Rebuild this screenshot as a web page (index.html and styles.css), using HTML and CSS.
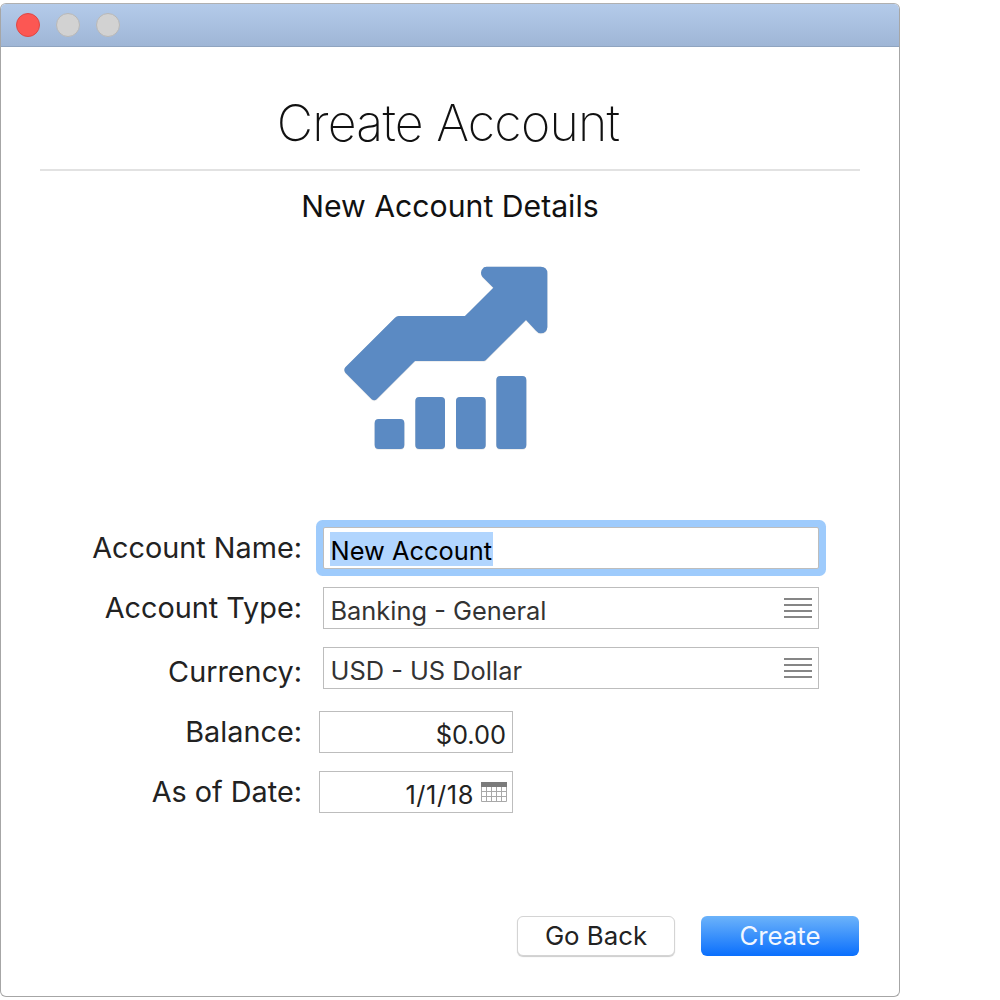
FILE: index.html
```html
<!DOCTYPE html>
<html lang="en">
<head>
<meta charset="utf-8">
<title>Create Account</title>
<link rel="stylesheet" href="styles.css">
</head>
<body>
<div class="window">
  <div class="titlebar">
    <span class="light close"></span>
    <span class="light"></span>
    <span class="light"></span>
  </div>
  <div class="content">
    <h1 class="title">Create Account</h1>
    <h2 class="subtitle">New Account Details</h2>
    <svg class="hero" viewBox="0 0 690 630" width="230" height="210" aria-hidden="true">
      <path class="hero-fill" d="M470 50L632 50Q652 50 652 70L652 232Q650 250 632 250Q625 250 618 242L588 210L467 331Q465 333 460 333L255 333L140 448Q133 454 125 448L46 368Q40 360 46 352L195 203Q200 198 206 198L405 198L490 113L457 80Q447 65 462 52Q466 50 470 50Z"/>
      <rect class="hero-fill" x="134" y="507" width="89" height="90" rx="12"/>
      <rect class="hero-fill" x="256" y="441" width="89" height="156" rx="12"/>
      <rect class="hero-fill" x="378" y="441" width="89" height="156" rx="12"/>
      <rect class="hero-fill" x="499" y="378" width="90" height="219" rx="12"/>
    </svg>
    <div class="form">
      <div class="row">
        <div class="label">Account Name:</div>
        <div class="field wide focused"><span class="selected">New Account</span></div>
      </div>
      <div class="row">
        <div class="label">Account Type:</div>
        <div class="field wide"><span class="value">Banking - General</span>
          <svg class="menu" viewBox="0 0 28 20" width="28" height="20" aria-hidden="true"><path d="M0 1h28M0 7h28M0 13h28M0 19h28"/></svg>
        </div>
      </div>
      <div class="row">
        <div class="label low">Currency:</div>
        <div class="field wide"><span class="value">USD - US Dollar</span>
          <svg class="menu" viewBox="0 0 28 20" width="28" height="20" aria-hidden="true"><path d="M0 1h28M0 7h28M0 13h28M0 19h28"/></svg>
        </div>
      </div>
      <div class="row row-split">
        <div class="label">Balance:</div>
        <div class="field short end"><span class="num">$0.00</span></div>
      </div>
      <div class="row">
        <div class="label">As of Date:</div>
        <div class="field short end date"><span class="num">1/1/18</span>
          <svg class="cal" viewBox="0 0 26 20" width="26" height="20" aria-hidden="true">
            <rect class="cal-top" x="0" y="0" width="26" height="5"/>
            <path class="cal-grid" d="M.5 5v14.500h25V5M.5 9.500h25M.5 14.500h25M5.500 5v14M10.500 5v14M15.500 5v14M20.500 5v14"/>
          </svg>
        </div>
      </div>
    </div>
    <div class="actions">
      <button class="btn back">Go Back</button>
      <button class="btn primary">Create</button>
    </div>
  </div>
</div>
</body>
</html>
```
FILE: styles.css
```css
* { box-sizing: border-box; }
html, body { margin: 0; padding: 0; background: #fff; }
body { padding-top: 3px; font-family: Inter, "Noto Sans", sans-serif; color: #222; }
.window {
  width: 900px;
  height: 994px;
  border: 1px solid #a6a6a6;
  border-top-color: #b0b0b0;
  border-radius: 6px;
  overflow: hidden;
  display: flex;
  flex-direction: column;
  background: #fff;
}
.titlebar {
  height: 43px;
  flex: none;
  display: flex;
  align-items: center;
  gap: 16px;
  padding: 0 0 1px 15px;
  background: linear-gradient(#b4cbea, #9fb6d6);
  border-bottom: 1px solid #8fa4c0;
}
.light {
  width: 24px;
  height: 24px;
  border-radius: 50%;
  background: #d2d2d2;
  border: 1px solid #b8b8b8;
}
.light.close { background: #fc5753; border-color: #df4744; }
.content { flex: 1; display: flex; flex-direction: column; }
.title {
  margin: 44px 39px 0;
  height: 80px;
  padding-right: 4px;
  border-bottom: 2px solid #e2e2e2;
  font-size: 50px;
  line-height: 64px;
  font-weight: 250;
  letter-spacing: -0.75px;
  text-align: center;
  color: #111;
}
.subtitle {
  margin: 15px 0 0;
  font-size: 30.2px;
  line-height: 40px;
  font-weight: 380;
  text-align: center;
  color: #111;
}
.hero {
  display: block;
  flex: none;
  margin: 24px 0 0 329px;
}
.hero-fill { fill: #5b8ac3; filter: drop-shadow(0 1px 1px rgba(0,0,0,.2)); }
.form { margin-top: 67px; display: flex; flex-direction: column; gap: 18px; }
.row { display: flex; align-items: center; height: 42px; }
.row-split { margin-top: 4px; }
.label {
  width: 301px;
  text-align: right;
  font-size: 28.8px;
  line-height: 42px;
  color: #222;
}
.label.low { padding-top: 7px; }
.field {
  height: 42px;
  border: 1px solid #bdbdbd;
  display: flex;
  align-items: center;
  font-size: 25.4px;
  background: #fff;
  color: #333;
}
.value, .num { margin-top: 5px; }
.wide { width: 496px; margin-left: 21px; padding: 0 6px 0 6.500px; justify-content: space-between; }
.short { width: 194px; margin-left: 17px; padding: 0 6px 0 7px; }
.end { justify-content: flex-end; }
.focused {
  box-shadow: 0 0 0 7px #9ecbfc;
  border-radius: 2px;
  padding: 0 0 0 5.500px;
  justify-content: flex-start;
}
.selected {
  background: #b1d5fe;
  color: #000;
  line-height: 30px;
  padding: 4px 1px 0;
  margin-top: 2px;
}
.num { color: #222; }
.menu { flex: none; }
.menu path { stroke: #868686; stroke-width: 2; fill: none; }
.date { padding-right: 5px; }
.date .num { margin-right: 7px; letter-spacing: .6px; }
.cal { flex: none; }
.cal-top { fill: #7b7b7b; }
.cal-grid { stroke: #a8a8a8; stroke-width: 1; fill: none; }
.actions {
  margin-top: auto;
  margin-bottom: 40px;
  padding-right: 40px;
  display: flex;
  justify-content: flex-end;
  gap: 26px;
}
.btn {
  width: 158px;
  height: 40px;
  padding: 0;
  border-radius: 6px;
  font-family: inherit;
  font-size: 25.8px;
  line-height: 36px;
}
.back {
  background: #fff;
  color: #222;
  border: 1px solid #d4d4d4;
  box-shadow: 0 1px 1px rgba(0,0,0,.2);
}
.primary {
  background: linear-gradient(#6cb3fa, #0a6ffd);
  color: #f2f7ff;
  border: 0;
}
```
